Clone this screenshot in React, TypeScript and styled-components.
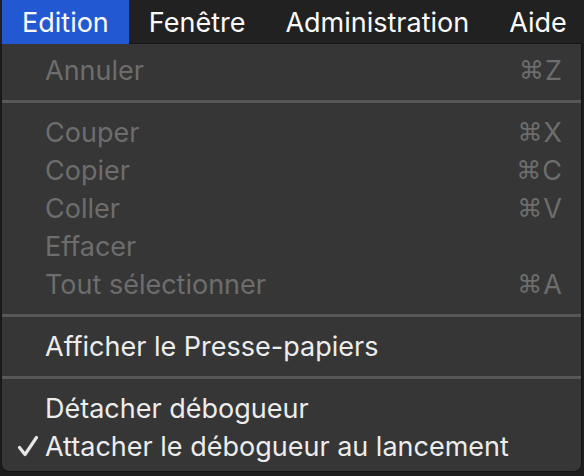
import React from "react";
import styled, { createGlobalStyle } from "styled-components";

const Global = createGlobalStyle`
  html, body { margin: 0; padding: 0; background: #1d1d1d; }
  body { width: 584px; height: 476px; overflow: hidden; }
`;

const FONT = `Inter, "Noto Sans", "DejaVu Sans", sans-serif`;

const Page = styled.div`
  width: 584px;
  height: 476px;
  background: #1d1d1d;
  font-family: ${FONT};
  -webkit-font-smoothing: antialiased;
`;

const MenuBar = styled.div`
  display: flex;
  height: 44px;
  padding-left: 2px;
  background: #212121;
  white-space: nowrap;
`;

const MenuTitle = styled.div<{ $active?: boolean }>`
  display: flex;
  align-items: center;
  padding: 0 20px;
  font-size: 27px;
  color: #fafafa;
  background: ${(p) => (p.$active ? "#2358d3" : "transparent")};
`;

const Panel = styled.div`
  margin-left: 2px;
  width: 579px;
  box-sizing: border-box;
  padding: 7px 0 6px;
  background: #363636;
  border-radius: 0 0 7px 7px;
  box-shadow: 0 0 0 1px #151515;
`;

const Item = styled.div<{ $disabled?: boolean }>`
  position: relative;
  display: flex;
  align-items: center;
  justify-content: space-between;
  height: 38px;
  padding: 0 19px 0 43px;
  font-size: 27px;
  white-space: nowrap;
  color: ${(p) => (p.$disabled ? "#6d6d6d" : "#ececec")};
`;

const Shortcut = styled.span`
  display: flex;
  align-items: center;
  gap: 1px;
`;

const CmdGlyph = styled.span`
  font-family: "DejaVu Sans", sans-serif;
  font-size: 25px;
`;

const Separator = styled.div`
  height: 24px;
  display: flex;
  align-items: center;
  &::after {
    content: "";
    flex: 1;
    height: 3px;
    background: #575757;
  }
`;

const Check = styled.svg`
  position: absolute;
  left: 15px;
  top: 8px;
`;

type Entry =
  | { kind: "item"; label: string; key?: string; disabled?: boolean; checked?: boolean }
  | { kind: "sep" };

const entries: Entry[] = [
  { kind: "item", label: "Annuler", key: "Z", disabled: true },
  { kind: "sep" },
  { kind: "item", label: "Couper", key: "X", disabled: true },
  { kind: "item", label: "Copier", key: "C", disabled: true },
  { kind: "item", label: "Coller", key: "V", disabled: true },
  { kind: "item", label: "Effacer", disabled: true },
  { kind: "item", label: "Tout sélectionner", key: "A", disabled: true },
  { kind: "sep" },
  { kind: "item", label: "Afficher le Presse-papiers" },
  { kind: "sep" },
  { kind: "item", label: "Détacher débogueur" },
  { kind: "item", label: "Attacher le débogueur au lancement", checked: true },
];

export default function App() {
  return (
    <Page>
      <Global />
      <MenuBar>
        <MenuTitle $active>Edition</MenuTitle>
        <MenuTitle>Fenêtre</MenuTitle>
        <MenuTitle>Administration</MenuTitle>
        <MenuTitle>Aide</MenuTitle>
      </MenuBar>
      <Panel>
        {entries.map((e, i) =>
          e.kind === "sep" ? (
            <Separator key={i} />
          ) : (
            <Item key={i} $disabled={e.disabled}>
              {e.checked && (
                <Check width="22" height="22" viewBox="0 0 22 22">
                  <path
                    d="M2.5 12.5 L8 19.5 L19.5 2.5"
                    fill="none"
                    stroke="#e6e6e6"
                    strokeWidth="3.2"
                    strokeLinecap="round"
                    strokeLinejoin="round"
                  />
                </Check>
              )}
              <span>{e.label}</span>
              {e.key && (
                <Shortcut>
                  <CmdGlyph>⌘</CmdGlyph>
                  <span>{e.key}</span>
                </Shortcut>
              )}
            </Item>
          )
        )}
      </Panel>
    </Page>
  );
}
